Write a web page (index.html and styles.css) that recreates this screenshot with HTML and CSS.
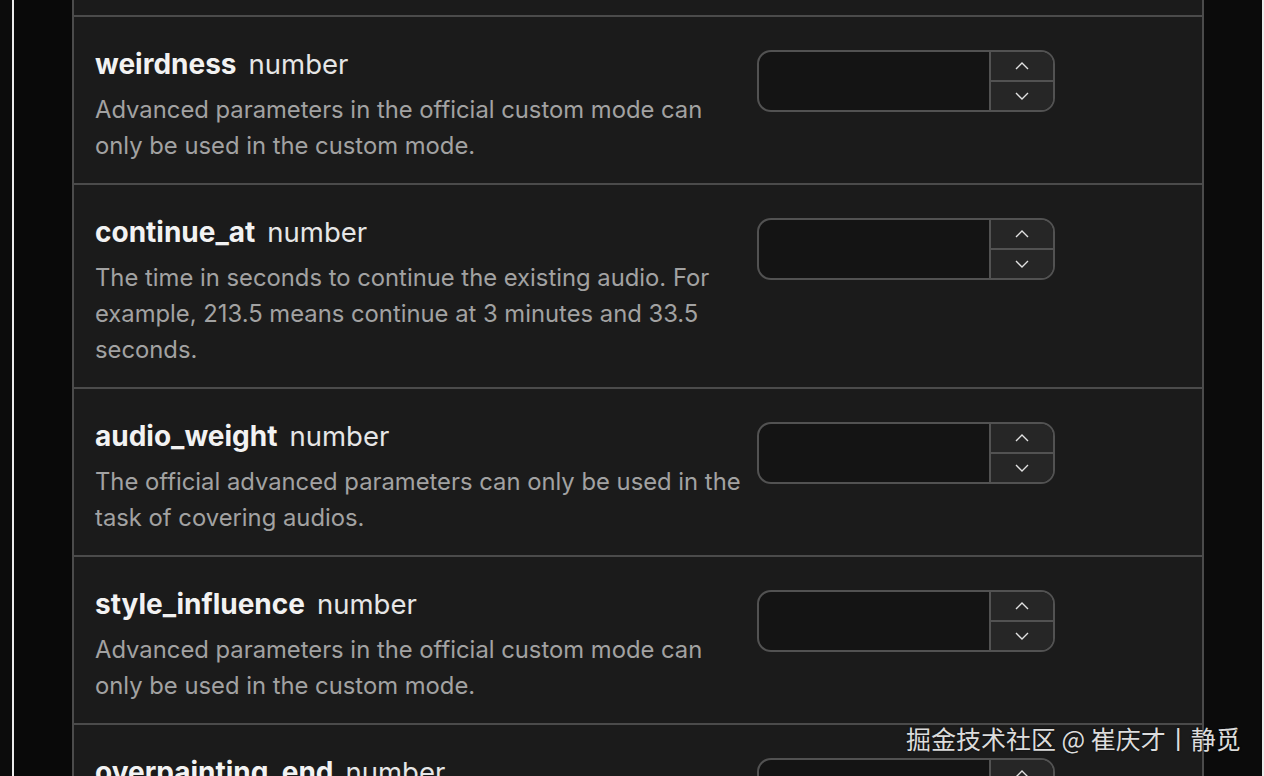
FILE: index.html
```html
<!DOCTYPE html>
<html lang="en">
<head>
<meta charset="utf-8">
<link rel="stylesheet" href="styles.css">
</head>
<body>
<div class="page">
  <div class="edge-left"></div>
  <div class="edge-line"></div>
  <div class="gutter"></div>
  <main class="panel">
    <div class="stub"></div>
    <section class="row">
      <div class="info">
        <h3 class="title"><span class="name">weirdness</span><span class="type">number</span></h3>
        <p class="desc">Advanced parameters in the official custom mode can only be used in the custom mode.</p>
      </div>
      <div class="numbox"><div class="field"></div><div class="spin"><div class="btn up"><svg viewBox="0 0 16 10" width="16" height="10"><path d="M2 8 L8 2 L14 8"/></svg></div><div class="btn down"><svg viewBox="0 0 16 10" width="16" height="10"><path d="M2 2 L8 8 L14 2"/></svg></div></div></div>
    </section>
    <section class="row">
      <div class="info">
        <h3 class="title"><span class="name">continue_at</span><span class="type">number</span></h3>
        <p class="desc">The time in seconds to continue the existing audio. For example, 213.5 means continue at 3 minutes and 33.5 seconds.</p>
      </div>
      <div class="numbox"><div class="field"></div><div class="spin"><div class="btn up"><svg viewBox="0 0 16 10" width="16" height="10"><path d="M2 8 L8 2 L14 8"/></svg></div><div class="btn down"><svg viewBox="0 0 16 10" width="16" height="10"><path d="M2 2 L8 8 L14 2"/></svg></div></div></div>
    </section>
    <section class="row">
      <div class="info">
        <h3 class="title"><span class="name">audio_weight</span><span class="type">number</span></h3>
        <p class="desc">The official advanced parameters can only be used in the task of covering audios.</p>
      </div>
      <div class="numbox"><div class="field"></div><div class="spin"><div class="btn up"><svg viewBox="0 0 16 10" width="16" height="10"><path d="M2 8 L8 2 L14 8"/></svg></div><div class="btn down"><svg viewBox="0 0 16 10" width="16" height="10"><path d="M2 2 L8 8 L14 2"/></svg></div></div></div>
    </section>
    <section class="row">
      <div class="info">
        <h3 class="title"><span class="name">style_influence</span><span class="type">number</span></h3>
        <p class="desc">Advanced parameters in the official custom mode can only be used in the custom mode.</p>
      </div>
      <div class="numbox"><div class="field"></div><div class="spin"><div class="btn up"><svg viewBox="0 0 16 10" width="16" height="10"><path d="M2 8 L8 2 L14 8"/></svg></div><div class="btn down"><svg viewBox="0 0 16 10" width="16" height="10"><path d="M2 2 L8 8 L14 2"/></svg></div></div></div>
    </section>
    <section class="row">
      <div class="info">
        <h3 class="title"><span class="name">overpainting_end</span><span class="type">number</span></h3>
        <p class="desc">Advanced parameters in the official custom mode can only be used in the custom mode.</p>
      </div>
      <div class="numbox"><div class="field"></div><div class="spin"><div class="btn up"><svg viewBox="0 0 16 10" width="16" height="10"><path d="M2 8 L8 2 L14 8"/></svg></div><div class="btn down"><svg viewBox="0 0 16 10" width="16" height="10"><path d="M2 2 L8 8 L14 2"/></svg></div></div></div>
    </section>
  </main>
  <div class="gutter-right"></div>
  <div class="edge-right"></div>
</div>
<div class="watermark">掘金技术社区 @ 崔庆才丨静觅</div>
</body>
</html>
```

FILE: styles.css
```css
html, body {
  margin: 0;
  padding: 0;
  height: 776px;
  overflow: hidden;
  background: #0a0a0a;
  font-family: Inter, "Noto Sans", "Liberation Sans", sans-serif;
}
.page {
  display: flex;
  height: 776px;
  overflow: hidden;
}
.edge-left {
  width: 12px;
  background: #0c0c0c;
}
.edge-line {
  width: 2px;
  background: #ececec;
}
.gutter {
  width: 58px;
  background: #090909;
}
.panel {
  width: 1128px;
  background: #1b1b1b;
  border-left: 2px solid #4b4b4b;
  border-right: 2px solid #4b4b4b;
  overflow: hidden;
}
.gutter-right {
  flex: 1;
  background: #0b0b0b;
}
.edge-right {
  width: 2px;
  background: #ececec;
}
.stub {
  height: 15px;
  border-bottom: 2px solid #4b4b4b;
}
.row {
  display: flex;
  align-items: flex-start;
  gap: 7px;
  padding: 31px 20px 19px 21px;
  border-bottom: 2px solid #4b4b4b;
}
.info {
  width: 655px;
  flex: none;
}
.title {
  margin: 0;
  font-size: 28px;
  line-height: 32px;
  display: flex;
  gap: 12px;
}
.name {
  font-weight: 700;
  color: #f2f2f2;
}
.type {
  font-weight: 400;
  font-size: 27.5px;
  color: #e6e6e6;
}
.desc {
  margin: 12px 0 0;
  font-size: 23.8px;
  line-height: 36px;
  color: #a2a2a2;
}
.numbox {
  margin-top: 2px;
  width: 298px;
  height: 62px;
  box-sizing: border-box;
  display: flex;
  border: 2px solid #525252;
  border-radius: 14px;
  background: #141414;
  overflow: hidden;
}
.field {
  flex: 1;
}
.spin {
  width: 62px;
  display: flex;
  flex-direction: column;
  border-left: 2px solid #525252;
  background: #262626;
}
.btn {
  flex: 1;
  display: flex;
  align-items: center;
  justify-content: center;
}
.btn.up {
  border-bottom: 2px solid #525252;
}
.btn svg path {
  fill: none;
  stroke: #e2e2e2;
  stroke-width: 1.4;
}
.watermark {
  position: absolute;
  left: 906px;
  top: 722px;
  font-family: "Noto Sans CJK SC", "Noto Sans", sans-serif;
  font-size: 25px;
  line-height: 32px;
  color: #dcdcdc;
  text-shadow: 0 0 2px rgba(0,0,0,0.6);
  white-space: nowrap;
}
```
